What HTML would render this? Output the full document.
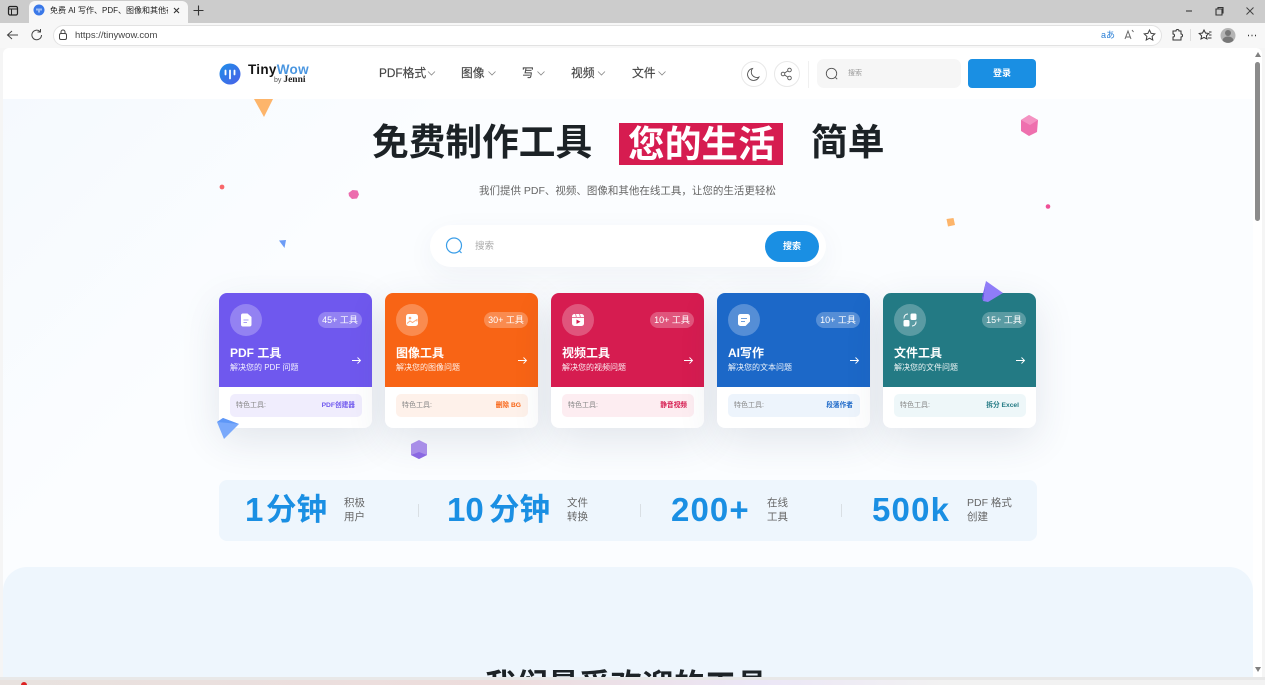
<!DOCTYPE html>
<html lang="zh"><head><meta charset="utf-8"><title>TinyWow</title>
<style>
*{box-sizing:border-box;margin:0;padding:0}
html,body{width:1265px;height:685px;overflow:hidden;background:#f5f5f5;font-family:"Liberation Sans","Noto Sans CJK SC",sans-serif}
.a{position:absolute}
.t{position:absolute;white-space:nowrap;line-height:1}
.card{position:absolute;top:293px;width:153px;height:135px;background:#fff;border-radius:8px;box-shadow:0 12px 40px rgba(40,60,90,.12)}
.top{position:absolute;left:0;top:0;width:153px;height:94px;border-radius:8px 8px 0 0}
.circ{position:absolute;left:11px;top:11px;width:32px;height:32px;border-radius:50%;background:rgba(255,255,255,.25)}
.pill{position:absolute;right:10px;top:19px;height:16px;width:44px;border-radius:8px;background:rgba(255,255,255,.25);color:#fff;font-size:9px;line-height:16px;text-align:center;white-space:nowrap}
.h{position:absolute;left:11px;top:53px;color:#fff;font-size:12px;font-weight:700;line-height:15px;white-space:nowrap}
.s{position:absolute;left:11px;top:69px;color:#fff;font-size:8px;line-height:12px;white-space:nowrap;opacity:.92}
.ar{position:absolute;left:132px;top:63px}
.f{position:absolute;left:11px;top:101px;width:132px;height:23px;border-radius:5px}
.f b{position:absolute;right:7px;top:0;line-height:23px;font-size:6.7px;white-space:nowrap}
.f span{position:absolute;left:6px;top:0;line-height:23px;font-size:7px;color:#888;white-space:nowrap}
.big{position:absolute;white-space:nowrap;color:#1a8fe3;font-weight:700;font-size:33px;line-height:40px;top:490px}
.cjk{font-size:30.5px}
.lab{position:absolute;white-space:nowrap;color:#666;font-size:10.5px;line-height:14px}
.sep{position:absolute;top:504px;width:1px;height:13px;background:#d9dfe4}
.nav{position:absolute;top:66px;font-size:11.8px;line-height:15px;color:#444;white-space:nowrap;-webkit-text-stroke:.15px #444}
</style></head><body>

<!-- browser tab strip -->
<div class="a" style="left:0;top:0;width:1265px;height:23px;background:#cccccc"></div>
<div class="a" style="left:29px;top:1px;width:159px;height:22px;background:#f7f7f7;border-radius:6px 6px 0 0"></div>
<div class="a" style="left:0;top:23px;width:1265px;height:25px;background:#f7f7f7"></div>
<svg class="a" style="left:0;top:0" width="1265" height="48" fill="none" stroke="#333" stroke-width="1">
 <rect x="8.500" y="6.500" width="9" height="8.500" rx="1.500" stroke="#222" stroke-width="1.200"/><path d="M8.500 9h9M11.500 9v6" stroke="#222"/>
 <circle cx="39" cy="10" r="5.500" fill="#3a78e8" stroke="none"/><path d="M37 8.500v2M39 8.500v4M41 8.500v2" stroke="#fff"/>
 <path d="M174 8l5 5M179 8l-5 5" stroke-width="1.100"/>
 <path d="M198.500 5.500v10M193.500 10.500h10" stroke-width="1.100"/>
 <path d="M1186 11h6" stroke="#444" stroke-width="1.200"/>
 <path d="M1216 9h6v6h-6zM1218 9V7.500h5V13h-1" stroke="#333" stroke-width="1.100"/>
 <path d="M1246.500 7.500l7 7M1253.500 7.500l-7 7" stroke="#444"/>
 <path d="M18 35H8M12 31l-4.500 4 4.500 4" stroke="#444"/>
 <path d="M41.500 35a4.800 4.800 0 1 1-1.500-3.500M40.500 29v3h-3" stroke="#444"/>
 <rect x="53.500" y="25.500" width="1108" height="20" rx="10" fill="#fff" stroke="#e2e2e2"/>
 <rect x="59.500" y="33.500" width="7" height="6" rx="1.500" stroke="#444"/><path d="M61 33.500v-1.500a2 2 0 0 1 4 0v1.500" stroke="#444"/>
 <path d="M1125 39l3-8 3 8M1126 37h4M1132 30l1.500 2" stroke="#666"/>
 <path d="M1149.500 30l1.600 3.400 3.700.5-2.700 2.500.7 3.600-3.300-1.800-3.300 1.800.7-3.600-2.700-2.500 3.700-.5z" stroke="#444"/>
 <path d="M1173 31h3a1.500 1.500 0 0 1 3 0h2v3a1.500 1.500 0 0 1 0 3v3h-8v-3a1.500 1.500 0 0 0 0-3z" stroke="#333"/>
 <path d="M1190.500 29v12" stroke="#ddd"/>
 <path d="M1204 30l1.500 3 3.300.5-2.400 2.300.6 3.200-3-1.600-3 1.600.6-3.200-2.400-2.300 3.300-.5zM1209 32h2.500M1209 35h2.500M1208 38h3.500" stroke="#333"/>
 <circle cx="1228" cy="35.500" r="7.500" fill="#b5b5b5" stroke="none"/><circle cx="1228" cy="33" r="3" fill="#777" stroke="none"/><path d="M1222.500 40.500a5.500 4 0 0 1 11 0 7.500 7.500 0 0 1-11 0z" fill="#777" stroke="none"/>
 <path d="M1248 35.500h1M1251.500 35.500h1M1255 35.500h1" stroke="#333" stroke-width="1.400"/>
</svg>
<div class="t" style="left:50px;top:5px;width:118px;overflow:hidden;font-size:8px;line-height:11px;color:#222">免费 AI 写作、PDF、图像和其他在线工具</div>
<div class="t" style="left:75px;top:30px;font-size:9.500px;line-height:11px;color:#444">https://tinywow.com</div>
<div class="t" style="left:1101px;top:29px;font-size:9px;line-height:12px;color:#2a7fd6">aあ</div>

<!-- page -->
<div class="a" style="left:3px;top:48px;width:1259px;height:629px;background:#fff;border-radius:6px 6px 0 0"></div>
<div class="a" style="left:3px;top:99px;width:1250px;height:578px;background:linear-gradient(135deg,#f5f9fe 0%,#fbfdff 25%,#fbfdff 100%)"></div>
<div class="a" style="left:3px;top:567px;width:1250px;height:110px;background:#eef6fd;border-radius:24px 24px 0 0"></div>
<div class="t" style="left:485px;top:668px;width:283px;height:9px;overflow:hidden;font-size:31.400px;line-height:36px;font-weight:700;color:#1c2226">我们最受欢迎的工具</div>
<div class="a" style="left:0;top:677px;width:1265px;height:3px;background:#e8e8e8"></div>
<div class="a" style="left:0;top:680px;width:1265px;height:5px;background:linear-gradient(90deg,#e8e2df,#eddcdc 40%,#ebe6f6 60%,#f2f2f2 75%)"></div>
<div class="a" style="left:21px;top:682px;width:6px;height:3px;background:#d22;border-radius:3px 3px 0 0"></div>

<!-- scrollbar -->
<div class="a" style="left:1255px;top:62px;width:5px;height:159px;background:#8b8b8b;border-radius:3px"></div>
<svg class="a" style="left:1254px;top:52px" width="8" height="625" fill="#808080"><path d="M4 0l3 5H1zM1 615h6l-3 5z"/></svg>

<!-- header -->
<svg class="a" style="left:219px;top:63px" width="22" height="22"><defs><linearGradient id="lg" x1="0" y1="0" x2="1" y2="1"><stop offset="0" stop-color="#1f8fe8"/><stop offset="1" stop-color="#4a5fe8"/></linearGradient></defs><circle cx="11" cy="11" r="10.500" fill="url(#lg)"/><path d="M6.500 7.500v4M11 7.500v8M15.500 7.500v4" stroke="#fff" stroke-width="1.800" stroke-linecap="round"/></svg>
<div class="t" style="left:248px;top:62px;font-size:13.500px;line-height:15px;font-weight:700;color:#151515;letter-spacing:.3px">Tiny<span style="color:#4a96e0">Wow</span></div>
<div class="t" style="left:274px;top:76px;font-size:7px;line-height:9px;color:#555">by <span style="font-family:'Liberation Serif',serif;font-size:9.500px;font-weight:700;color:#222">Jenni</span></div>

<div class="nav" style="left:379px">PDF格式</div>
<div class="nav" style="left:461px">图像</div>
<div class="nav" style="left:522px">写</div>
<div class="nav" style="left:571px">视频</div>
<div class="nav" style="left:632px">文件</div>
<svg class="a" style="left:360px;top:50px" width="320" height="50" fill="none" stroke="#888" stroke-width=".8"><path d="M68 21.500l3.500 3.500 3.500-3.500M128.500 21.500l3.500 3.500 3.500-3.500M177.500 21.500l3.500 3.500 3.500-3.500M238 21.500l3.500 3.500 3.500-3.500M298.500 21.500l3.500 3.500 3.500-3.500"/></svg>

<div class="a" style="left:741px;top:61px;width:26px;height:26px;border:1px solid #e8e8e8;border-radius:50%;background:#fff"></div>
<div class="a" style="left:774px;top:61px;width:26px;height:26px;border:1px solid #e8e8e8;border-radius:50%;background:#fff"></div>
<div class="a" style="left:808px;top:61px;width:1px;height:27px;background:#f0f0f0"></div>
<div class="a" style="left:817px;top:59px;width:144px;height:29px;border-radius:7px;background:#f6f6f6"></div>
<svg class="a" style="left:741px;top:61px" width="100" height="26" fill="none" stroke="#555" stroke-width=".9">
 <path d="M11.500 7.500a6 6 0 1 0 6.500 8.500 5.500 5.500 0 0 1-6.500-8.500z"/>
 <circle cx="42" cy="13" r="1.800"/><circle cx="48.500" cy="9" r="1.800"/><circle cx="48.500" cy="17" r="1.800"/><path d="M43.600 12l3.300-2.100M43.600 14l3.300 2.100"/>
 <circle cx="90.500" cy="12.500" r="5.200"/><path d="M94.500 16.500l1.700 1.700"/>
</svg>
<div class="t" style="left:848px;top:69px;font-size:7px;line-height:9px;color:#999">搜索</div>
<div class="a" style="left:968px;top:59px;width:68px;height:29px;border-radius:4px;background:#1a8fe3;color:#fff;font-size:9px;font-weight:700;line-height:29px;text-align:center">登录</div>

<!-- hero -->
<div class="t" style="left:372px;top:121px;font-size:36.700px;line-height:44px;font-weight:700;color:#1c2226">免费制作工具</div>
<div class="a" style="left:619px;top:123px;width:164px;height:42px;background:#d61c50"></div>
<div class="t" style="left:628px;top:123px;font-size:36.700px;line-height:44px;font-weight:700;color:#fff">您的生活</div>
<div class="t" style="left:811px;top:121px;font-size:36.700px;line-height:44px;font-weight:700;color:#1c2226">简单</div>
<div class="t" style="left:479px;top:184px;font-size:10.500px;line-height:15px;color:#666">我们提供 PDF、视频、图像和其他在线工具，让您的生活更轻松</div>

<!-- decorations -->
<svg class="a" style="left:0;top:0" width="1265" height="685">
 <path d="M254 99h19l-9 18z" fill="#fdb56b"/>
 <circle cx="222" cy="187" r="2.400" fill="#f8676a"/>
 <path d="M348.500 193l4-3 5 .5 1.500 4-2 4-5 .5-3-3z" fill="#ec6cae"/>
 <path d="M279 240.500l7-.5-1.500 8z" fill="#6c9cf6"/>
 <path d="M1029 115l9 5-1 12-8 4-8-5 0-11z" fill="#ee70ae"/><path d="M1029 115l9 5-8 5-9-5z" fill="#f492c2"/>
 <circle cx="1048" cy="206.500" r="2.300" fill="#ef4f96"/>
 <path d="M946.500 219l7-1 1.500 7-7 1.500z" fill="#fdb56b"/>
</svg>

<!-- search -->
<div class="a" style="left:430px;top:225px;width:396px;height:42px;border-radius:21px;background:#fff;box-shadow:0 8px 28px rgba(40,60,90,.05)"></div>
<svg class="a" style="left:444px;top:236px" width="20" height="20" fill="none" stroke="#3b9ee8" stroke-width="1.200"><circle cx="10" cy="9.500" r="7.500"/><path d="M15.500 15l2 2"/></svg>
<div class="t" style="left:475px;top:241px;font-size:9.500px;line-height:11px;color:#aaa">搜索</div>
<div class="a" style="left:765px;top:231px;width:54px;height:31px;border-radius:16px;background:#1a8fe3;color:#fff;font-size:9px;font-weight:700;line-height:31px;text-align:center">搜索</div>

<!-- cards -->
<div class="card" style="left:219px">
 <div class="top" style="background:#6f58ee"></div><div class="circ"></div>
 <svg class="a" style="left:19px;top:19px" width="16" height="16"><path d="M3 3.500a2 2 0 0 1 2-2h4.500l4 3.500v7.500a2 2 0 0 1-2 2H5a2 2 0 0 1-2-2z" fill="#fff"/><path d="M5.500 8h5M5.500 10.500h3.500" stroke="#a99cf4" stroke-width="1"/></svg>
 <div class="pill">45+ 工具</div><div class="h">PDF 工具</div><div class="s">解决您的 PDF 问题</div>
 <svg class="ar" width="11" height="9" fill="none" stroke="#fff" stroke-width=".9"><path d="M1 4.500h8.500M6.500 1.500l3 3-3 3"/></svg>
 <div class="f" style="background:#f0edfd"><span>特色工具:</span><b style="color:#6f58ee">PDF创建器</b></div>
</div>
<div class="card" style="left:385px">
 <div class="top" style="background:#f86415"></div><div class="circ"></div>
 <svg class="a" style="left:19px;top:19px" width="16" height="16"><rect x="2" y="2" width="12" height="12" rx="2.500" fill="#fff"/><circle cx="6" cy="6" r="1.300" fill="#fba878"/><path d="M3 11.500l3-2.500 2.500 1.500L13 7.500v2" stroke="#fba878" stroke-width="1" fill="none"/></svg>
 <div class="pill">30+ 工具</div><div class="h">图像工具</div><div class="s">解决您的图像问题</div>
 <svg class="ar" width="11" height="9" fill="none" stroke="#fff" stroke-width=".9"><path d="M1 4.500h8.500M6.500 1.500l3 3-3 3"/></svg>
 <div class="f" style="background:#fef1ea"><span>特色工具:</span><b style="color:#f86415">删除 BG</b></div>
</div>
<div class="card" style="left:551px">
 <div class="top" style="background:#d61c50"></div><div class="circ"></div>
 <svg class="a" style="left:19px;top:19px" width="16" height="16"><rect x="2" y="2" width="12" height="12" rx="2.500" fill="#fff"/><path d="M2 5.500h12M5.500 2l1 3.500M9.500 2l1 3.500" stroke="#e6799a" stroke-width=".9"/><path d="M6.500 7.500l4 2.200-4 2.200z" fill="#d61c50"/></svg>
 <div class="pill">10+ 工具</div><div class="h">视频工具</div><div class="s">解决您的视频问题</div>
 <svg class="ar" width="11" height="9" fill="none" stroke="#fff" stroke-width=".9"><path d="M1 4.500h8.500M6.500 1.500l3 3-3 3"/></svg>
 <div class="f" style="background:#fdedf1"><span>特色工具:</span><b style="color:#d61c50">静音视频</b></div>
</div>
<div class="card" style="left:717px">
 <div class="top" style="background:#1c68c8"></div><div class="circ"></div>
 <svg class="a" style="left:19px;top:19px" width="16" height="16"><path d="M2 4.500a2.500 2.500 0 0 1 2.500-2.500h7A2.500 2.500 0 0 1 14 4.500v5L9.500 14h-5A2.500 2.500 0 0 1 2 11.500z" fill="#fff"/><path d="M5 6.500h6M5 9.500h4" stroke="#6d9fdd" stroke-width="1"/></svg>
 <div class="pill">10+ 工具</div><div class="h">AI写作</div><div class="s">解决您的文本问题</div>
 <svg class="ar" width="11" height="9" fill="none" stroke="#fff" stroke-width=".9"><path d="M1 4.500h8.500M6.500 1.500l3 3-3 3"/></svg>
 <div class="f" style="background:#edf4fc"><span>特色工具:</span><b style="color:#1c68c8">段落作者</b></div>
</div>
<div class="card" style="left:883px">
 <div class="top" style="background:#237a84"></div><div class="circ"></div>
 <svg class="a" style="left:19px;top:19px" width="16" height="16"><rect x="8.500" y="1.500" width="6" height="6.500" rx="1.500" fill="#fff"/><rect x="1.500" y="8" width="6" height="6.500" rx="1.500" fill="#fff"/><path d="M2 6.500a4 4 0 0 1 4-4.500M14 9.500a4 4 0 0 1-4 4.500" fill="none" stroke="#fff" stroke-width="1"/></svg>
 <div class="pill">15+ 工具</div><div class="h">文件工具</div><div class="s">解决您的文件问题</div>
 <svg class="ar" width="11" height="9" fill="none" stroke="#fff" stroke-width=".9"><path d="M1 4.500h8.500M6.500 1.500l3 3-3 3"/></svg>
 <div class="f" style="background:#eef7f9"><span>特色工具:</span><b style="color:#237a84">拆分 Excel</b></div>
</div>

<!-- decorations over cards -->
<svg class="a" style="left:0;top:0" width="1265" height="685">
 <path d="M217 422l6-4 16 6-15 15z" fill="#7aa9fb"/><path d="M217 422l6-4 16 6z" fill="#5e97f7"/>
 <path d="M419 440l8 4v11l-8 4-8-4v-11z" fill="#a88ee8"/><path d="M411 455l8-3 8 3-8 4z" fill="#8a68e2"/>
 <path d="M986 281l17 12-15 9-5-1z" fill="#8f7cf8"/><path d="M986 281l-3 20-1-3z" fill="#6a52ea"/>
</svg>

<!-- stats -->
<div class="a" style="left:219px;top:480px;width:818px;height:61px;border-radius:8px;background:#eef6fd"></div>
<div class="big" style="left:245px">1</div><div class="big cjk" style="left:266px">分钟</div>
<div class="lab" style="left:344px;top:496px">积极<br>用户</div>
<div class="sep" style="left:418px"></div>
<div class="big" style="left:447px">10</div><div class="big cjk" style="left:489px">分钟</div>
<div class="lab" style="left:567px;top:496px">文件<br>转换</div>
<div class="sep" style="left:640px"></div>
<div class="big" style="left:671px;letter-spacing:1.100px">200+</div>
<div class="lab" style="left:767px;top:496px">在线<br>工具</div>
<div class="sep" style="left:841px"></div>
<div class="big" style="left:872px;letter-spacing:1.200px">500k</div>
<div class="lab" style="left:967px;top:496px">PDF 格式<br>创建</div>

</body></html>
